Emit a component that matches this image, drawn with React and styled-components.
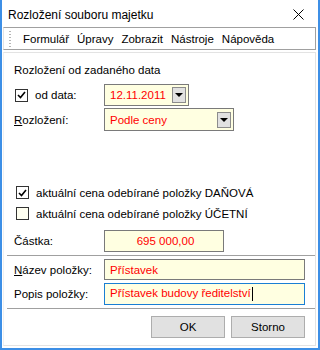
import styled, { createGlobalStyle } from 'styled-components'

const GlobalStyle = createGlobalStyle`
  body {
    margin: 0;
    background: #ffffff;
    font-family: "Liberation Sans", Arial, sans-serif;
  }
`

const Window = styled.div`
  width: 320px;
  height: 350px;
  box-sizing: border-box;
  border: 2px solid #3d8fe6;
  border-top: none;
  background: #ffffff;
  display: flex;
  flex-direction: column;
  font-size: 11.5px;
  color: #000;
`

const TitleBar = styled.div`
  height: 27px;
  display: flex;
  align-items: center;
  justify-content: space-between;
  padding: 2px 14px 0 6px;
  box-sizing: border-box;
  font-size: 12px;
`

const Toolbar = styled.div`
  height: 23px;
  box-sizing: border-box;
  margin: 0 2px 0 1px;
  border: 1px solid #a0a0a0;
  border-left-color: #e3e3e3;
  display: flex;
  align-items: center;
  padding-left: 5px;
`

const Grip = styled.div`
  width: 2px;
  height: 16px;
  margin-right: 8px;
  background-image: linear-gradient(#b5b5b5 50%, transparent 50%);
  background-size: 2px 3px;
`

const MenuItem = styled.span`
  padding: 0 4px;
`

const Panel = styled.div`
  flex: 1;
  margin: 2px 2px 2px 1px;
  border: 1px solid #e3e3e3;
  border-left-color: #f0f0f0;
  display: flex;
  flex-direction: column;
  padding: 10px 0 6px 3px;
`

const Heading = styled.div`
  line-height: 14px;
  padding-left: 7px;
`

const Row = styled.div`
  display: flex;
  align-items: center;
  padding-left: 7px;
  margin-top: ${(p) => p.$mt || 0}px;
`

const Label = styled.div`
  width: 90px;
  flex-shrink: 0;
  display: flex;
  align-items: center;
`

const Box = styled.div`
  width: 13px;
  height: 13px;
  box-sizing: border-box;
  border: 1px solid #333;
  background: ${(p) => (p.$cream ? '#fffff0' : '#fff')};
  margin-right: ${(p) => p.$gap}px;
  margin-left: ${(p) => p.$ml || 0}px;
  display: flex;
  align-items: center;
  justify-content: center;
  flex-shrink: 0;
`

const Field = styled.div`
  width: ${(p) => p.$w}px;
  height: ${(p) => p.$h}px;
  box-sizing: border-box;
  border: 1px solid ${(p) => (p.$focus ? '#1a7fd4' : '#7a7a7a')};
  background: #ffffe1;
  color: #ff0000;
  display: flex;
  align-items: center;
  justify-content: ${(p) => (p.$center ? 'center' : 'space-between')};
  padding: 0 2px 0 5px;
`

const DropButton = styled.div`
  width: 14px;
  height: 16px;
  box-sizing: border-box;
  border: 1px solid #8c8c8c;
  background: #e1e1e1;
  display: flex;
  align-items: center;
  justify-content: center;
`

const Triangle = styled.div`
  width: 0;
  height: 0;
  border-left: 4px solid transparent;
  border-right: 4px solid transparent;
  border-top: 4px solid #000;
`

const Caret = styled.span`
  display: inline-block;
  width: 1px;
  height: 14px;
  background: #000;
  margin-left: 1px;
  vertical-align: middle;
`

const Separator = styled.div`
  height: 1px;
  background: #a0a0a0;
  margin-top: ${(p) => p.$mt}px;
`

const ButtonRow = styled.div`
  display: flex;
  justify-content: flex-end;
  gap: 6px;
  margin-top: 7px;
  padding-right: 10px;
`

const Button = styled.div`
  width: 74px;
  height: 22px;
  box-sizing: border-box;
  border: 1px solid #adadad;
  background: #e1e1e1;
  display: flex;
  align-items: center;
  justify-content: center;
`

const Check = () => (
  <svg width="9" height="8" viewBox="0 0 9 8">
    <path d="M1 4 L3.5 6.5 L8 1" fill="none" stroke="#000" strokeWidth="1.6" />
  </svg>
)

export default function App() {
  return (
    <>
      <GlobalStyle />
      <Window>
        <TitleBar>
          <span>Rozložení souboru majetku</span>
          <svg width="11" height="11" viewBox="0 0 11 11">
            <path d="M0.5 0.5 L10.5 10.5 M10.5 0.5 L0.5 10.5" stroke="#000" strokeWidth="1" />
          </svg>
        </TitleBar>
        <Toolbar>
          <Grip />
          <MenuItem>Formulář</MenuItem>
          <MenuItem>Úpravy</MenuItem>
          <MenuItem>Zobrazit</MenuItem>
          <MenuItem>Nástroje</MenuItem>
          <MenuItem>Nápověda</MenuItem>
        </Toolbar>
        <Panel>
          <Heading>Rozložení od zadaného data</Heading>
          <Row $mt={7}>
            <Label>
              <Box $gap={7} $ml={1}><Check /></Box>od data:
            </Label>
            <Field $w={85} $h={22}>
              12.11.2011
              <DropButton><Triangle /></DropButton>
            </Field>
          </Row>
          <Row $mt={2}>
            <Label><span><u>R</u>ozložení:</span></Label>
            <Field $w={130} $h={23}>
              Podle ceny
              <DropButton><Triangle /></DropButton>
            </Field>
          </Row>
          <Row $mt={55}>
            <Box $gap={7} $ml={2}><Check /></Box>
            aktuální cena odebírané položky DAŇOVÁ
          </Row>
          <Row $mt={8}>
            <Box $gap={7} $ml={2} $cream />
            aktuální cena odebírané položky ÚČETNÍ
          </Row>
          <Row $mt={10}>
            <Label>Částka:</Label>
            <Field $w={120} $h={22} $center>695 000,00</Field>
          </Row>
          <Separator $mt={3} />
          <Row $mt={3}>
            <Label><span><u>N</u>ázev položky:</span></Label>
            <Field $w={201} $h={21}>Přístavek</Field>
          </Row>
          <Row $mt={3}>
            <Label>Popis položky:</Label>
            <Field $w={201} $h={22} $focus>
              <span>Přístavek budovy ředitelství<Caret /></span>
            </Field>
          </Row>
          <Separator $mt={3} />
          <ButtonRow>
            <Button>OK</Button>
            <Button>Storno</Button>
          </ButtonRow>
        </Panel>
      </Window>
    </>
  )
}
